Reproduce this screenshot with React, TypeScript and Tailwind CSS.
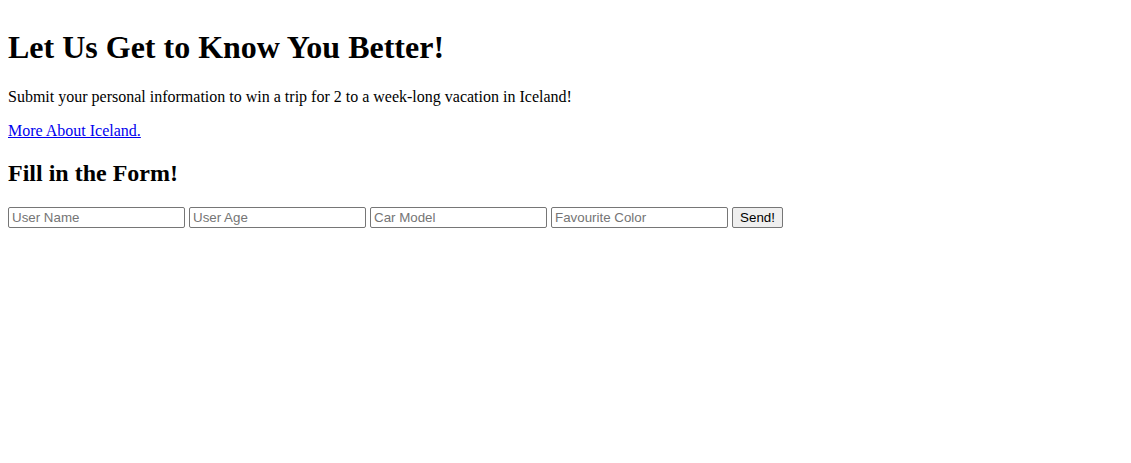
import React from 'react';

const inputClass =
    "w-[177px] h-[21px] border border-[#767676] rounded-[2px] px-[3px] py-[1px] text-[13.333px] text-black bg-white placeholder:text-[#757575] [font-family:'Liberation_Sans',Arial,sans-serif] outline-none";

const App: React.FC = () => {
    return (
        <div className="min-h-[463px] bg-white pt-2 px-2 text-black [font-family:'Liberation_Serif','Times_New_Roman',serif]">
            <h1 className="text-[32px] font-bold leading-[normal] my-[21.44px]">Let Us Get to Know You Better!</h1>
            <p className="text-[16px] leading-[normal] my-4">
                Submit your personal information to win a trip for 2 to a week-long vacation in Iceland!
            </p>
            <p className="text-[16px] leading-[normal] my-4">
                <a href="#" className="text-[#0000ee] underline">More About Iceland.</a>
            </p>
            <h2 className="text-[24px] font-bold leading-[normal] my-[19.92px]">Fill in the Form!</h2>
            <form className="flex items-center gap-[4px]" onSubmit={(e) => e.preventDefault()}>
                <input type="text" placeholder="User Name" className={inputClass} />
                <input type="text" placeholder="User Age" className={inputClass} />
                <input type="text" placeholder="Car Model" className={inputClass} />
                <input type="text" placeholder="Favourite Color" className={inputClass} />
                <button
                    type="submit"
                    className="w-[51px] h-[21px] border border-[#767676] rounded-[2px] bg-[#efefef] text-[13.333px] text-black [font-family:'Liberation_Sans',Arial,sans-serif]"
                >
                    Send!
                </button>
            </form>
        </div>
    );
};

export default App;
